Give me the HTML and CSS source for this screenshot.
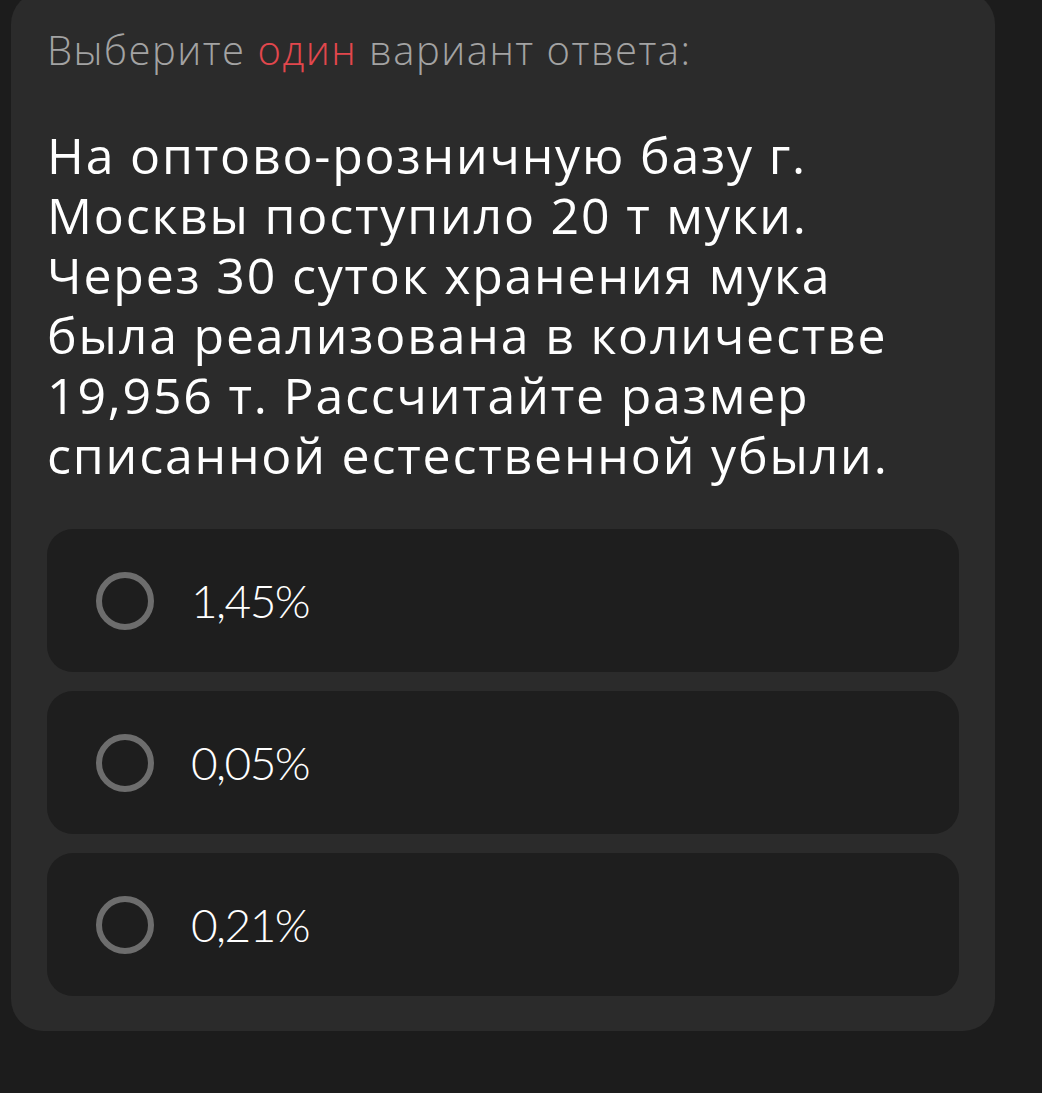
FILE: index.html
```html
<!DOCTYPE html>
<html lang="ru">
<head>
    <meta charset="UTF-8">
    <meta name="viewport" content="width=device-width, initial-scale=1.0">
    <title>Вопрос теста</title>
    <link rel="stylesheet" href="styles.css">
</head>
<body>
    <div class="card">
        <div class="hint">Выберите <span class="accent">один</span> вариант ответа:</div>

        <div class="question">
            На оптово-розничную базу г. Москвы поступило 20 т муки. Через 30 суток хранения мука была реализована в количестве 19,956 т. Рассчитайте размер списанной естественной убыли.
        </div>

        <div class="options">
            <label class="option">
                <span class="radio"></span>
                <span class="option-text">1,45%</span>
            </label>
            <label class="option">
                <span class="radio"></span>
                <span class="option-text">0,05%</span>
            </label>
            <label class="option">
                <span class="radio"></span>
                <span class="option-text">0,21%</span>
            </label>
        </div>
    </div>
</body>
</html>
```

FILE: styles.css
```css
body {
    margin: 0;
    background-color: #1c1c1c;
    font-family: "Open Sans", Lato, sans-serif;
}
.card {
    width: 984px;
    box-sizing: border-box;
    margin: -8px 0 0 11px;
    padding: 34px 36px 35px 36px;
    background-color: #2b2b2b;
    border-radius: 32px;
}
.hint {
    color: #a3a3a3;
    font-size: 40px;
    line-height: 48px;
    font-weight: 300;
    letter-spacing: 1.5px;
}
.accent {
    color: #e2474d;
}
.question {
    margin-top: 51px;
    color: #ffffff;
    font-size: 50px;
    line-height: 60px;
    letter-spacing: 1.8px;
}
.options {
    margin-top: 44px;
    display: flex;
    flex-direction: column;
    gap: 19px;
}
.option {
    display: flex;
    align-items: center;
    height: 143px;
    padding-left: 49px;
    background-color: #1e1e1e;
    border-radius: 26px;
}
.radio {
    width: 58px;
    height: 58px;
    box-sizing: border-box;
    border: 6px solid #6d6d6d;
    border-radius: 50%;
}
.option-text {
    margin-left: 37px;
    color: #ffffff;
    font-family: Lato, sans-serif;
    font-size: 46px;
    font-weight: 300;
    letter-spacing: -1.6px;
}
```
